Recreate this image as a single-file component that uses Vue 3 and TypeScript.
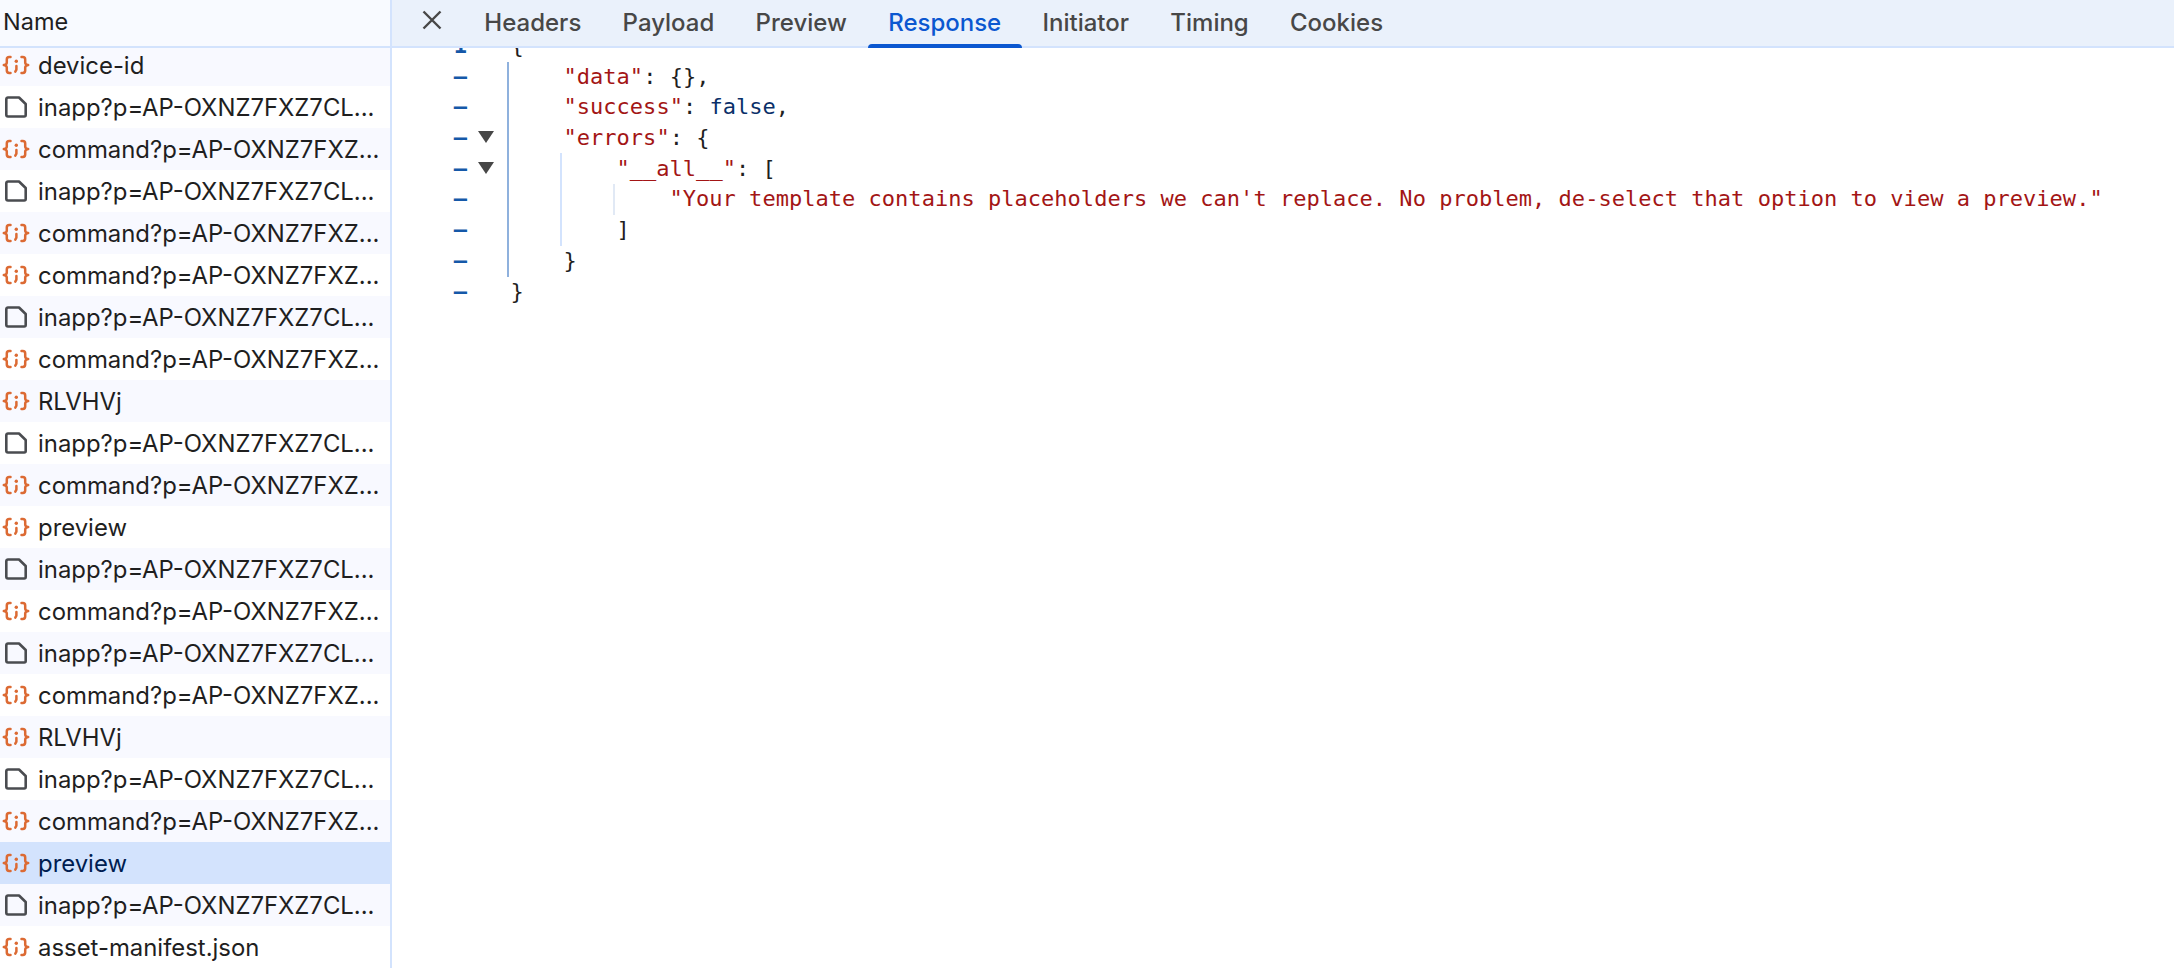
<script setup lang="ts">
type Row = { name: string; kind: 'json' | 'doc'; selected?: boolean }

const inapp = 'inapp?p=AP-OXNZ7FXZ7CL...'
const command = 'command?p=AP-OXNZ7FXZ...'

const rows: Row[] = [
  { name: 'device-id', kind: 'json' },
  { name: inapp, kind: 'doc' },
  { name: command, kind: 'json' },
  { name: inapp, kind: 'doc' },
  { name: command, kind: 'json' },
  { name: command, kind: 'json' },
  { name: inapp, kind: 'doc' },
  { name: command, kind: 'json' },
  { name: 'RLVHVj', kind: 'json' },
  { name: inapp, kind: 'doc' },
  { name: command, kind: 'json' },
  { name: 'preview', kind: 'json' },
  { name: inapp, kind: 'doc' },
  { name: command, kind: 'json' },
  { name: inapp, kind: 'doc' },
  { name: command, kind: 'json' },
  { name: 'RLVHVj', kind: 'json' },
  { name: inapp, kind: 'doc' },
  { name: command, kind: 'json' },
  { name: 'preview', kind: 'json', selected: true },
  { name: inapp, kind: 'doc' },
  { name: 'asset-manifest.json', kind: 'json' },
]

const tabs = ['Headers', 'Payload', 'Preview', 'Response', 'Initiator', 'Timing', 'Cookies']
</script>

<template>
  <div class="app">
    <aside class="list">
      <div class="list-head">Name</div>
      <div class="list-body">
        <div
          v-for="(row, i) in rows"
          :key="i"
          class="row"
          :class="{ odd: i % 2 === 0, selected: row.selected }"
        >
          <svg v-if="row.kind === 'json'" class="ico" viewBox="0 0 28 28" fill="none">
            <g stroke="#dc6a33" stroke-width="2.5" stroke-linecap="round" stroke-linejoin="round">
              <path d="M8.500 6H7.200A2.400 2.400 0 0 0 4.800 8.400v3c0 1.400-1 2.300-3 2.600 2 .3 3 1.200 3 2.600v3A2.400 2.400 0 0 0 7.200 22h1.300" />
              <path d="M19.500 6h1.300a2.400 2.400 0 0 1 2.400 2.400v3c0 1.400 1 2.300 3 2.600-2 .3-3 1.200-3 2.600v3a2.400 2.400 0 0 1-2.400 2.400h-1.300" />
              <path d="M14.400 15v3.600l-1.100 2" />
            </g>
            <circle cx="14.300" cy="10.300" r="1.700" fill="#dc6a33" />
          </svg>
          <svg v-else class="ico" viewBox="0 0 28 28" fill="none">
            <path
              d="M6 4.500h11l6.700 6.500v11a1.500 1.500 0 0 1-1.500 1.500H6A1.700 1.700 0 0 1 4.300 21.800V6.200A1.700 1.700 0 0 1 6 4.500Z"
              stroke="#4a4c50"
              stroke-width="2.600"
              stroke-linejoin="round"
            />
          </svg>
          <span class="row-name">{{ row.name }}</span>
        </div>
      </div>
    </aside>

    <main class="detail">
      <nav class="tabbar">
        <svg class="close" viewBox="0 0 24 24" fill="none">
          <path d="M3.500 3.500 20.500 20.500M20.500 3.500 3.500 20.500" stroke="#474747" stroke-width="2.400" />
        </svg>
        <span v-for="t in tabs" :key="t" class="tab" :class="{ active: t === 'Response' }">{{ t }}</span>
      </nav>

      <div class="code-wrap">
        <div class="code">
          <div class="line"><span class="num">1</span><span class="fold"></span><span class="src"><span class="pun">{</span></span></div>
          <div class="line"><span class="num">–</span><span class="fold"></span><span class="src in1"><span class="str">"data"</span><span class="pun">: {},</span></span></div>
          <div class="line"><span class="num">–</span><span class="fold"></span><span class="src in1"><span class="str">"success"</span><span class="pun">: </span><span class="bool">false</span><span class="pun">,</span></span></div>
          <div class="line"><span class="num">–</span><span class="fold open"></span><span class="src in1"><span class="str">"errors"</span><span class="pun">: {</span></span></div>
          <div class="line"><span class="num">–</span><span class="fold open"></span><span class="src in2"><span class="str">"__all__"</span><span class="pun">: [</span></span></div>
          <div class="line"><span class="num">–</span><span class="fold"></span><span class="src in3"><span class="str">"Your template contains placeholders we can't replace. No problem, de-select that option to view a preview."</span></span></div>
          <div class="line"><span class="num">–</span><span class="fold"></span><span class="src in2"><span class="pun">]</span></span></div>
          <div class="line"><span class="num">–</span><span class="fold"></span><span class="src in1"><span class="pun">}</span></span></div>
          <div class="line"><span class="num">–</span><span class="fold"></span><span class="src"><span class="pun">}</span></span></div>
          <i class="guide g1"></i>
          <i class="guide g2"></i>
          <i class="guide g3"></i>
        </div>
      </div>
    </main>
  </div>
</template>

<style>
html,
body {
  margin: 0;
  background: #fff;
  overflow: hidden;
}
</style>

<style scoped>
.app {
  display: flex;
  width: 2174px;
  height: 968px;
  overflow: hidden;
  font-family: Inter, "Liberation Sans", sans-serif;
  color: #1f1f1f;
}
.list {
  flex: none;
  width: 390px;
  display: flex;
  flex-direction: column;
  border-right: 2px solid #d3e3fd;
}
.list-head {
  flex: none;
  height: 46px;
  padding-left: 3px;
  font-size: 23.500px;
  line-height: 44px;
  background: #f8faff;
  border-bottom: 2px solid #d3e3fd;
  position: relative;
  z-index: 1;
}
.list-body {
  flex: 1;
  overflow: hidden;
  margin-top: -4px;
}
.row {
  height: 42px;
  display: flex;
  align-items: center;
  font-size: 23.900px;
  background: #fff;
}
.row.odd {
  background: #f8f9ff;
}
.row.selected {
  background: #d3e3fd;
  color: #001d51;
}
.ico {
  flex: none;
  width: 28px;
  height: 28px;
  margin-left: 2px;
  margin-right: 8px;
}
.row-name {
  white-space: nowrap;
}
.detail {
  flex: 1;
  min-width: 0;
  display: flex;
  flex-direction: column;
}
.tabbar {
  flex: none;
  height: 46px;
  display: flex;
  align-items: stretch;
  background: #eaf1fb;
  border-bottom: 2px solid #d3e3fd;
  position: relative;
  z-index: 1;
}
.close {
  flex: none;
  width: 24px;
  height: 24px;
  margin: 8px 19.700px 0 28px;
}
.tab {
  padding: 0 20.650px;
  font-size: 24px;
  font-weight: 500;
  line-height: 46px;
  color: #474747;
  position: relative;
}
.tab.active {
  color: #0b57d0;
}
.tab.active::after {
  content: "";
  position: absolute;
  left: 0;
  right: 0;
  bottom: -2px;
  height: 4px;
  background: #0b57d0;
  border-radius: 4px 4px 0 0;
}
.code-wrap {
  flex: 1;
  overflow: hidden;
}
.code {
  position: relative;
  margin-top: -17px;
  font-family: "DejaVu Sans Mono", "Liberation Mono", monospace;
  font-size: 22px;
  line-height: 30.7px;
  letter-spacing: 0.025px;
}
.line {
  display: flex;
  height: 30.700px;
  white-space: pre;
}
.num {
  flex: none;
  width: 75px;
  text-align: right;
  color: #1558a8;
  font-weight: 700;
}
.fold {
  flex: none;
  width: 43.500px;
  position: relative;
}
.fold.open::before {
  content: "";
  position: absolute;
  left: 10.500px;
  top: 8px;
  border-left: 8px solid transparent;
  border-right: 8px solid transparent;
  border-top: 12px solid #474747;
}
.src.in1 {
  padding-left: 53px;
}
.src.in2 {
  padding-left: 106px;
}
.src.in3 {
  padding-left: 159px;
}
.str {
  color: #a31515;
}
.bool {
  color: #0a3069;
}
.pun {
  color: #1f1f1f;
}
.guide {
  position: absolute;
  width: 2px;
}
.g1 {
  left: 114.500px;
  top: 31px;
  height: 215px;
  background: #8fb1dd;
}
.g2 {
  left: 168px;
  top: 122px;
  height: 93px;
  background: #d3e3fd;
}
.g3 {
  left: 221px;
  top: 153px;
  height: 31px;
  background: #e1e9f5;
}
</style>
